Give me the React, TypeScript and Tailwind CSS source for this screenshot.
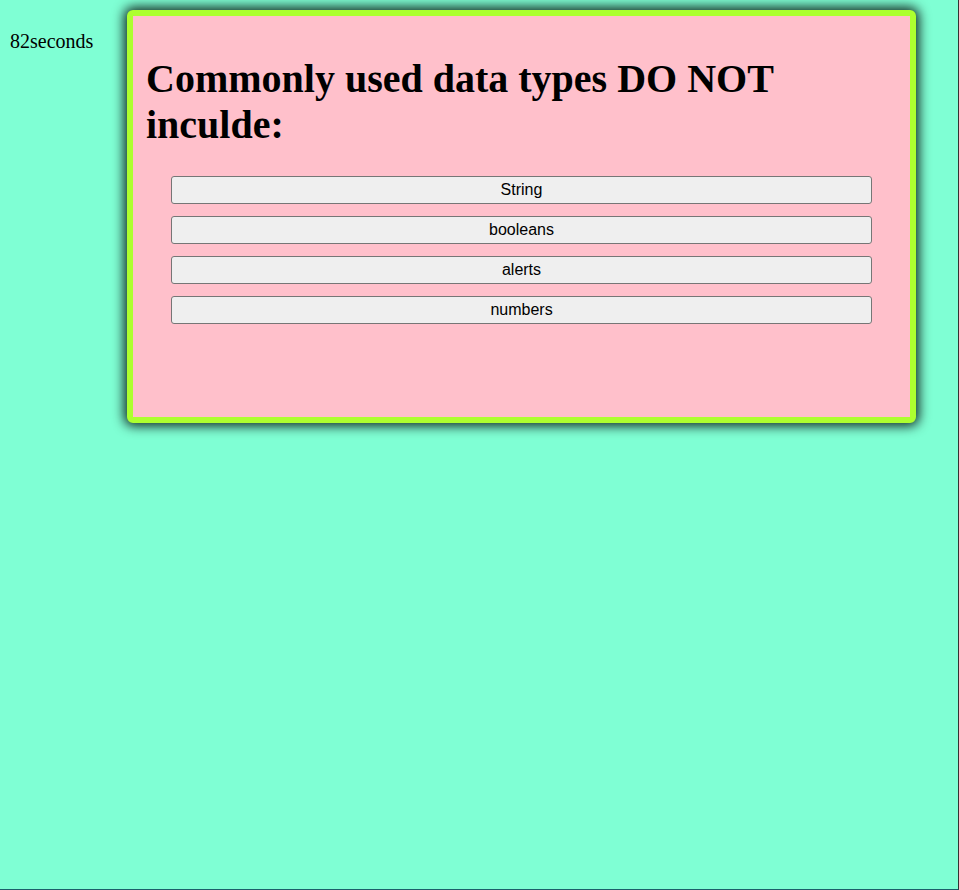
const answers = ["String", "booleans", "alerts", "numbers"];

export default function App() {
  return (
    <div className="flex min-h-[890px] w-full items-start border-r border-b border-r-[#333333] border-b-[#1d5f6a] bg-[#7fffd4] font-['Liberation_Serif',serif] text-black">
      <div className="mt-[30px] w-[127px] shrink-0 pl-[10px] text-[20px] leading-[22px]">82seconds</div>
      <QuizCard />
    </div>
  );
}

function QuizCard() {
  return (
    <section className="mt-[10px] w-[789px] rounded-[6px] border-[6px] border-[#adff2f] bg-[#ffc0cb] p-[13px] shadow-[0_0_12px_3px_rgba(0,0,0,0.85)]">
      <h1 className="mt-[27px] mb-[28px] text-[40px] font-bold leading-[46px]">
        Commonly used data types DO NOT inculde:
      </h1>
      <ul className="mb-[80px] px-[25px]">
        {answers.map((a) => (
          <li key={a} className="mb-[12px]">
            <button className="h-[28px] w-full rounded-[3px] border border-[#767676] bg-[#efefef] font-['Liberation_Sans',sans-serif] text-[16px] leading-[26px] text-black">
              {a}
            </button>
          </li>
        ))}
      </ul>
    </section>
  );
}
